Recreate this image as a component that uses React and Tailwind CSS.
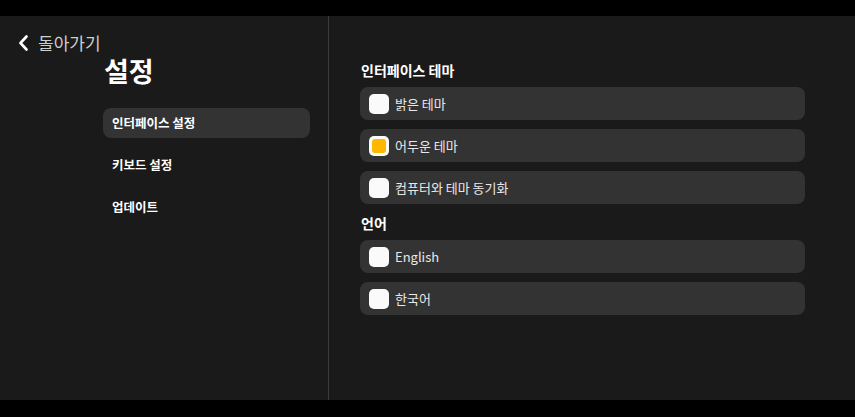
import React from "react";

const font = { fontFamily: '"Noto Sans CJK KR", "Noto Sans", sans-serif' };

function Option({ label, checked }) {
  return (
    <div className="flex h-[33px] w-[445px] items-center gap-[6px] rounded-lg bg-[#333333] pl-[9px]">
      <div className="h-5 w-5 rounded-[5px] bg-[#fafafa] p-[3px]">
        {checked && <div className="h-full w-full rounded-[3px] bg-[#ffb800]" />}
      </div>
      <span className="text-[13px] leading-none text-[#e8e8e8]">{label}</span>
    </div>
  );
}

function Section({ title, children }) {
  return (
    <div className="flex flex-col">
      <h2 className="pl-px text-[14px] font-bold leading-5 text-white">{title}</h2>
      <div className="mt-[7px] flex flex-col gap-[9px]">{children}</div>
    </div>
  );
}

export default function App() {
  return (
    <div className="h-[417px] w-full bg-black pt-4" style={font}>
      <div className="flex h-[384px] bg-[#1a1a1a]">
        <aside className="w-[329px] shrink-0 border-r border-[#3a3c41] pt-[15px]">
          <button className="flex h-6 items-center gap-[8px] pl-[18px] text-[17px] leading-6 text-[#cfcfcf]">
            <svg width="12" height="16" viewBox="0 0 12 16" fill="none">
              <path d="M8.5 1.5 L2.5 8 L8.5 14.5" stroke="white" strokeWidth="2.6" strokeLinecap="round" strokeLinejoin="round" />
            </svg>
            <span>돌아가기</span>
          </button>
          <div className="ml-[103px] w-[207px]">
            <h1 className="h-8 pl-px text-[27px] font-bold leading-8 text-white">설정</h1>
            <nav className="mt-[21px] flex flex-col gap-3">
              <div className="flex h-[30px] items-center rounded-lg bg-[#333333] px-[9px] pt-px text-[12.5px] font-bold text-white">인터페이스 설정</div>
              <div className="flex h-[30px] items-center rounded-lg px-[9px] pt-px text-[12.5px] font-bold text-white">키보드 설정</div>
              <div className="flex h-[30px] items-center rounded-lg px-[9px] pt-px text-[12.5px] font-bold text-white">업데이트</div>
            </nav>
          </div>
        </aside>
        <main className="flex flex-1 flex-col gap-[9px] pl-[31px] pt-[44px]">
          <Section title="인터페이스 테마">
            <Option label="밝은 테마" />
            <Option label="어두운 테마" checked />
            <Option label="컴퓨터와 테마 동기화" />
          </Section>
          <Section title="언어">
            <Option label="English" />
            <Option label="한국어" />
          </Section>
        </main>
      </div>
    </div>
  );
}
